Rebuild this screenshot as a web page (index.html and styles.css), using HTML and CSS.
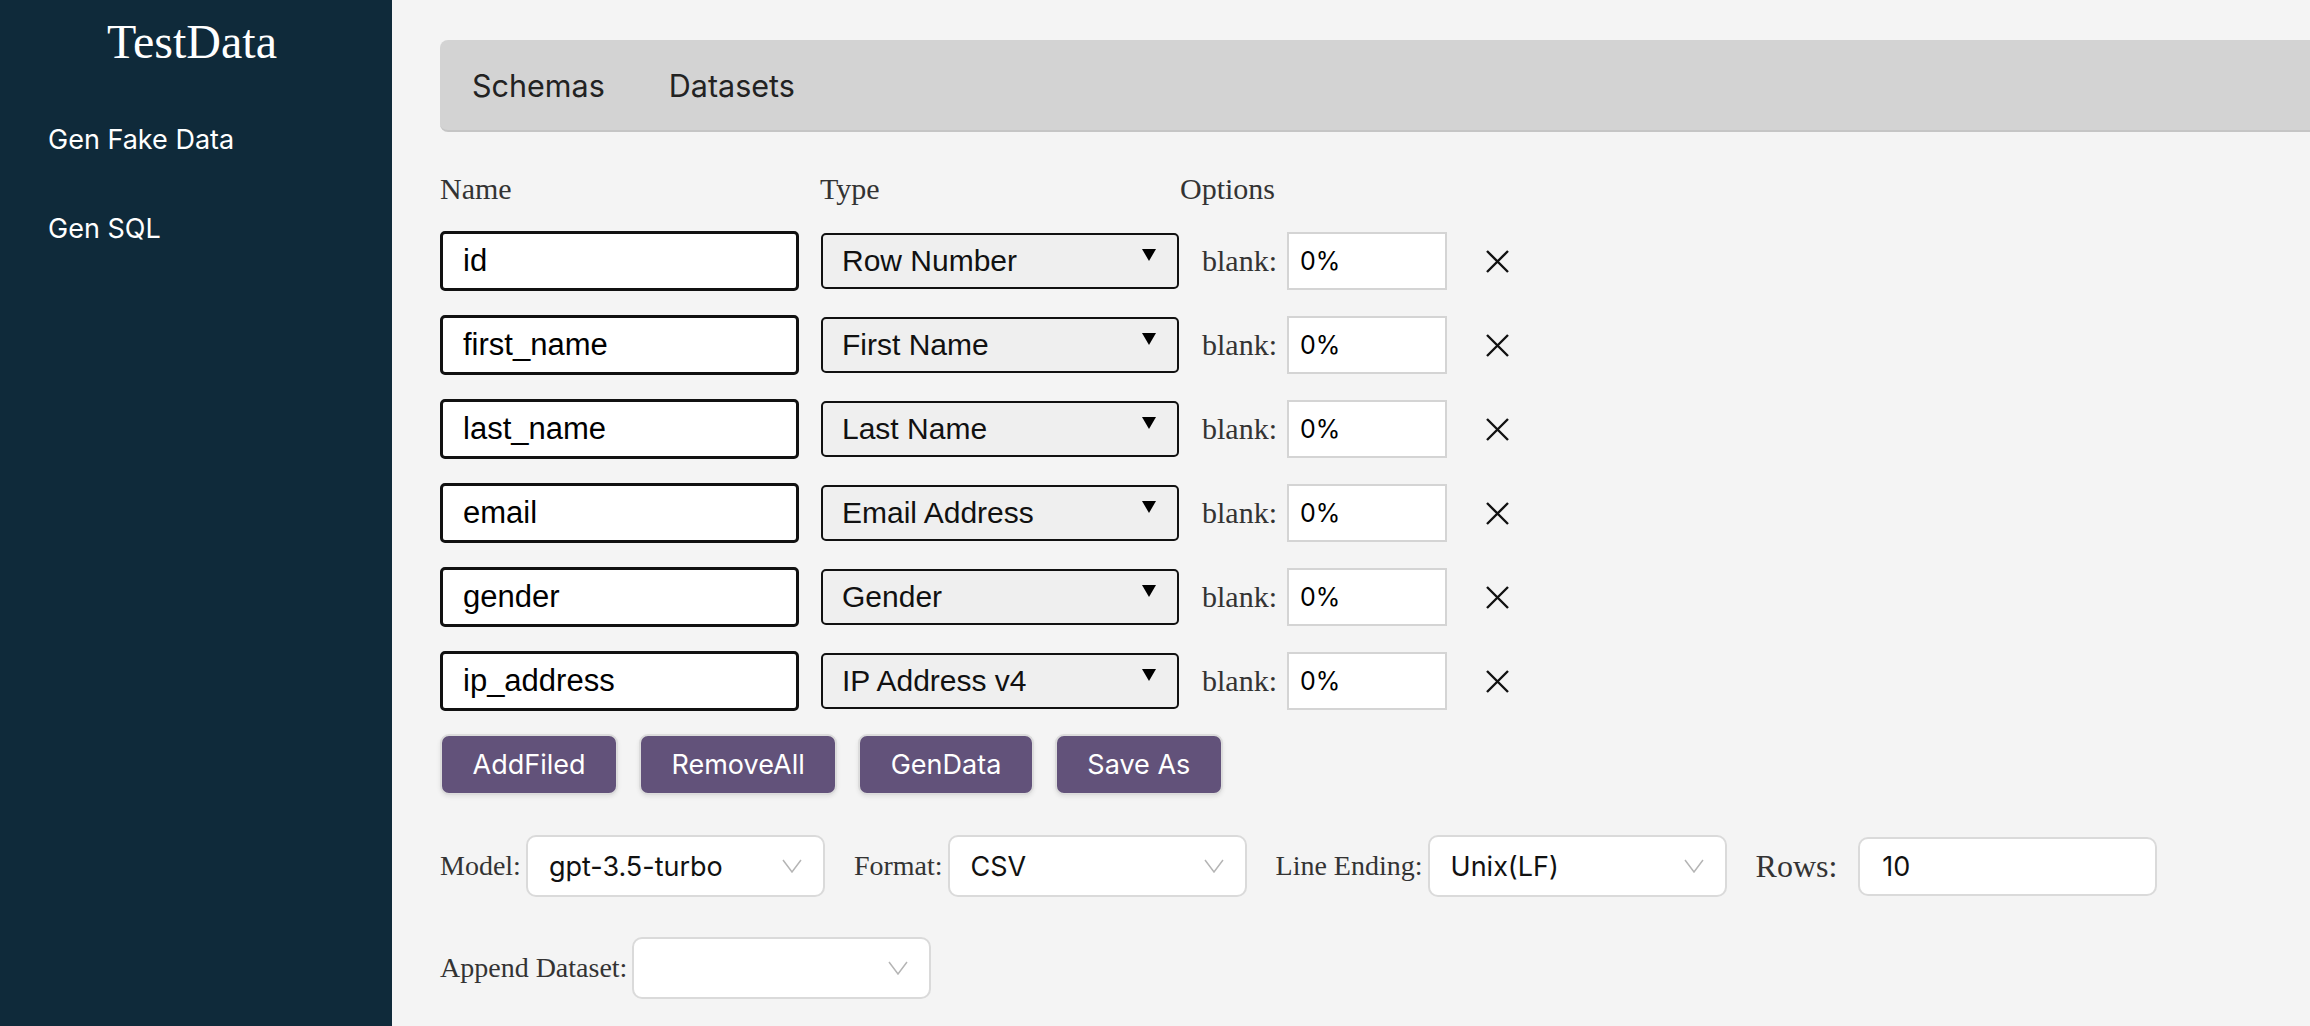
FILE: index.html
```html
<!DOCTYPE html>
<html lang="en">
<head>
<meta charset="utf-8">
<title>TestData</title>
<link rel="stylesheet" href="styles.css">
</head>
<body>
<div class="app">
  <aside class="sidebar">
    <div class="brand">TestData</div>
    <nav class="nav">
      <a class="nav-item">Gen Fake Data</a>
      <a class="nav-item">Gen SQL</a>
    </nav>
  </aside>
  <main class="main">
    <div class="tabs">
      <span class="tab">Schemas</span>
      <span class="tab">Datasets</span>
    </div>

    <div class="field-head">
      <span class="head-name">Name</span>
      <span class="head-type">Type</span>
      <span class="head-opt">Options</span>
    </div>

    <div class="field-row">
      <div class="name-input">id</div>
      <div class="type-select"><span>Row Number</span><svg class="tri" width="14" height="12" viewBox="0 0 14 12"><path d="M0 0H14L7 12Z" fill="#000"/></svg></div>
      <div class="options"><span class="blank-label">blank:</span><div class="pct-input">0%</div><svg class="remove" width="25" height="25" viewBox="0 0 25 25"><path d="M2 2L23 23M23 2L2 23" stroke="#111" stroke-width="2.4" fill="none"/></svg></div>
    </div>
    <div class="field-row">
      <div class="name-input">first_name</div>
      <div class="type-select"><span>First Name</span><svg class="tri" width="14" height="12" viewBox="0 0 14 12"><path d="M0 0H14L7 12Z" fill="#000"/></svg></div>
      <div class="options"><span class="blank-label">blank:</span><div class="pct-input">0%</div><svg class="remove" width="25" height="25" viewBox="0 0 25 25"><path d="M2 2L23 23M23 2L2 23" stroke="#111" stroke-width="2.4" fill="none"/></svg></div>
    </div>
    <div class="field-row">
      <div class="name-input">last_name</div>
      <div class="type-select"><span>Last Name</span><svg class="tri" width="14" height="12" viewBox="0 0 14 12"><path d="M0 0H14L7 12Z" fill="#000"/></svg></div>
      <div class="options"><span class="blank-label">blank:</span><div class="pct-input">0%</div><svg class="remove" width="25" height="25" viewBox="0 0 25 25"><path d="M2 2L23 23M23 2L2 23" stroke="#111" stroke-width="2.4" fill="none"/></svg></div>
    </div>
    <div class="field-row">
      <div class="name-input">email</div>
      <div class="type-select"><span>Email Address</span><svg class="tri" width="14" height="12" viewBox="0 0 14 12"><path d="M0 0H14L7 12Z" fill="#000"/></svg></div>
      <div class="options"><span class="blank-label">blank:</span><div class="pct-input">0%</div><svg class="remove" width="25" height="25" viewBox="0 0 25 25"><path d="M2 2L23 23M23 2L2 23" stroke="#111" stroke-width="2.4" fill="none"/></svg></div>
    </div>
    <div class="field-row">
      <div class="name-input">gender</div>
      <div class="type-select"><span>Gender</span><svg class="tri" width="14" height="12" viewBox="0 0 14 12"><path d="M0 0H14L7 12Z" fill="#000"/></svg></div>
      <div class="options"><span class="blank-label">blank:</span><div class="pct-input">0%</div><svg class="remove" width="25" height="25" viewBox="0 0 25 25"><path d="M2 2L23 23M23 2L2 23" stroke="#111" stroke-width="2.4" fill="none"/></svg></div>
    </div>
    <div class="field-row">
      <div class="name-input">ip_address</div>
      <div class="type-select"><span>IP Address v4</span><svg class="tri" width="14" height="12" viewBox="0 0 14 12"><path d="M0 0H14L7 12Z" fill="#000"/></svg></div>
      <div class="options"><span class="blank-label">blank:</span><div class="pct-input">0%</div><svg class="remove" width="25" height="25" viewBox="0 0 25 25"><path d="M2 2L23 23M23 2L2 23" stroke="#111" stroke-width="2.4" fill="none"/></svg></div>
    </div>

    <div class="actions">
      <button class="btn">AddFiled</button>
      <button class="btn">RemoveAll</button>
      <button class="btn">GenData</button>
      <button class="btn">Save As</button>
    </div>

    <div class="settings">
      <span class="set-label">Model:</span>
      <div class="picker"><span>gpt-3.5-turbo</span><svg class="chev" width="20" height="14" viewBox="0 0 20 14"><path d="M1 1L10 13L19 1" stroke="#b5b5b5" stroke-width="1.5" fill="none"/></svg></div>
      <span class="set-label">Format:</span>
      <div class="picker"><span>CSV</span><svg class="chev" width="20" height="14" viewBox="0 0 20 14"><path d="M1 1L10 13L19 1" stroke="#b5b5b5" stroke-width="1.5" fill="none"/></svg></div>
      <span class="set-label">Line Ending:</span>
      <div class="picker"><span>Unix(LF)</span><svg class="chev" width="20" height="14" viewBox="0 0 20 14"><path d="M1 1L10 13L19 1" stroke="#b5b5b5" stroke-width="1.5" fill="none"/></svg></div>
      <span class="set-label rows-label">Rows:</span>
      <div class="rows-input">10</div>
    </div>

    <div class="settings">
      <span class="set-label">Append Dataset:</span>
      <div class="picker"><span></span><svg class="chev" width="20" height="14" viewBox="0 0 20 14"><path d="M1 1L10 13L19 1" stroke="#b5b5b5" stroke-width="1.5" fill="none"/></svg></div>
    </div>
  </main>
</div>
</body>
</html>
```

FILE: styles.css
```css
html, body {
  margin: 0;
  padding: 0;
  height: 100%;
}
body {
  background: #f4f4f4;
  font-family: "Liberation Serif", "Times New Roman", serif;
  overflow: hidden;
}
.app {
  display: flex;
  height: 1026px;
}
.sidebar {
  width: 392px;
  flex: none;
  background: #0f2a3a;
  color: #fff;
}
.brand {
  font-family: "Liberation Serif", serif;
  font-size: 48px;
  line-height: 55px;
  text-align: center;
  padding: 14px 8px 0 0;
}
.nav {
  margin-top: 56px;
  display: flex;
  flex-direction: column;
  gap: 59px;
}
.nav-item {
  display: block;
  padding: 0 48px;
  font-family: Inter, "Noto Sans", sans-serif;
  font-size: 27px;
  line-height: 30px;
  color: #fff;
}
.main {
  flex: 1;
  padding: 40px 0 0 48px;
  overflow: hidden;
}
.tabs {
  height: 90px;
  background: #d3d3d3;
  border-bottom: 2px solid #c5c5c5;
  border-radius: 8px 0 0 8px;
  display: flex;
  align-items: center;
}
.tab {
  padding: 0 32px;
  font-family: Inter, "Noto Sans", sans-serif;
  font-size: 30.5px;
  color: #222;
}
.field-head {
  margin-top: 39px;
  display: flex;
  font-size: 30px;
  line-height: 35px;
  color: #333;
}
.head-name { width: 380px; }
.head-type { width: 360px; }
.field-row {
  display: flex;
  align-items: center;
  height: 60px;
  margin-top: 24px;
}
.field-head + .field-row {
  margin-top: 25px;
}
.name-input {
  box-sizing: border-box;
  width: 359px;
  height: 60px;
  border: 3px solid #111;
  border-radius: 5px;
  background: #fff;
  padding: 0 20px;
  display: flex;
  align-items: center;
  font-family: "Liberation Sans", Arial, sans-serif;
  font-size: 31px;
  color: #000;
}
.type-select {
  box-sizing: border-box;
  margin-left: 22px;
  width: 358px;
  height: 56px;
  border: 2.5px solid #111;
  border-radius: 5px;
  background: #efefef;
  padding: 0 21px 0 19px;
  display: flex;
  align-items: center;
  justify-content: space-between;
  font-family: "Liberation Sans", Arial, sans-serif;
  font-size: 30px;
  color: #111;
}
.tri {
  margin-top: -12px;
}
.options {
  display: flex;
  align-items: center;
  margin-left: 23px;
}
.blank-label {
  font-size: 30px;
  color: #333;
}
.pct-input {
  box-sizing: border-box;
  margin-left: 10px;
  width: 160px;
  height: 58px;
  border: 2px solid #d4d4d4;
  background: #fff;
  padding-left: 11px;
  display: flex;
  align-items: center;
  font-family: Inter, "Noto Sans", sans-serif;
  font-size: 25px;
  color: #000;
}
.remove {
  margin-left: 38px;
}
.actions {
  display: flex;
  gap: 21px;
  margin-top: 23px;
}
.btn {
  height: 61px;
  padding: 0 30.5px;
  background: #62527a;
  color: #fff;
  border: 2px solid #dcdcdc;
  border-radius: 9px;
  box-shadow: 0 2px 4px rgba(0, 0, 0, 0.08);
  font-family: Inter, "Noto Sans", sans-serif;
  font-size: 27px;
}
.settings {
  display: flex;
  align-items: center;
  margin-top: 40px;
}
.set-label {
  font-size: 28px;
  color: #333;
  margin-right: 5px;
}
.picker {
  box-sizing: border-box;
  width: 299px;
  height: 62px;
  border: 2px solid #dadada;
  border-radius: 10px;
  background: #fff;
  padding: 0 21px;
  display: flex;
  align-items: center;
  justify-content: space-between;
  font-family: Inter, "Noto Sans", sans-serif;
  font-size: 27px;
  color: #111;
  margin-right: 29px;
}
.rows-label {
  font-size: 32px;
  margin-right: 21px;
}
.rows-input {
  box-sizing: border-box;
  width: 299px;
  height: 59px;
  border: 2px solid #dadada;
  border-radius: 10px;
  background: #fff;
  padding: 0 22px;
  display: flex;
  align-items: center;
  font-family: Inter, "Noto Sans", sans-serif;
  font-size: 27px;
  color: #111;
}
```
